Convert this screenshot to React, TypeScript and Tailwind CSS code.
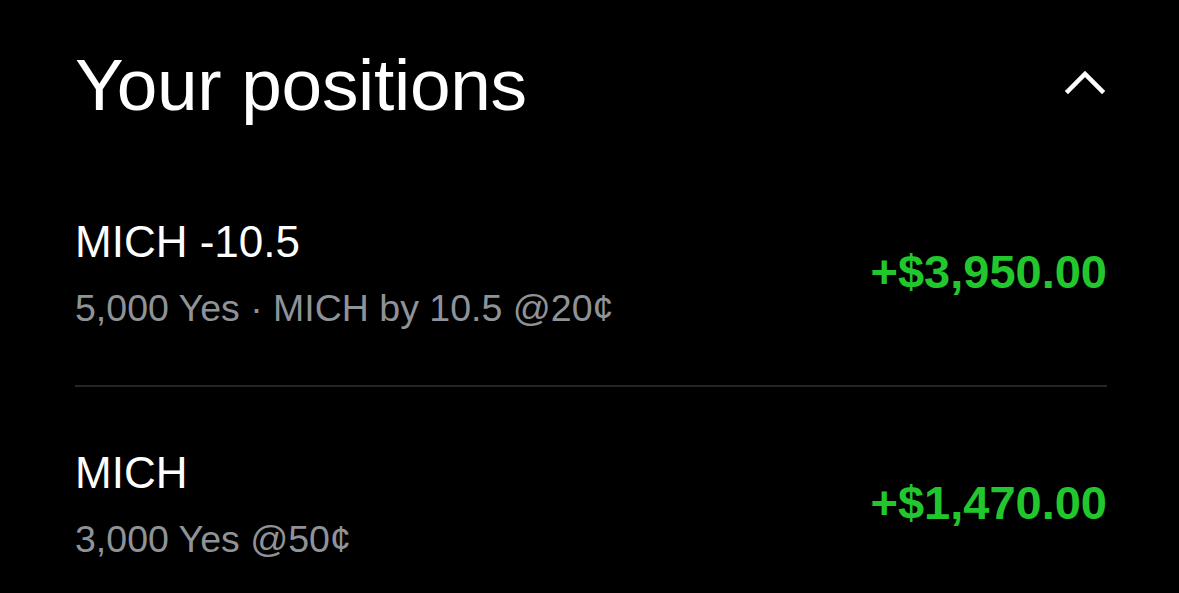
import React from 'react';

const positions = [
  { name: 'MICH -10.5', detail: '5,000 Yes · MICH by 10.5 @20¢', pnl: '+$3,950.00' },
  { name: 'MICH', detail: '3,000 Yes @50¢', pnl: '+$1,470.00' },
];

function ChevronUp() {
  return (
    <svg width="40" height="26" viewBox="0 0 40 26" fill="none" className="mb-[6px] mr-[2px]">
      <polyline points="3,22 20,5 37,22" stroke="white" strokeWidth="4.5" strokeLinecap="square" strokeLinejoin="miter" />
    </svg>
  );
}

export default function App() {
  return (
    <div
      className="min-h-screen bg-black text-white pl-[75px] pr-[72px] pt-[45px]"
      style={{ fontFamily: '"Liberation Sans", Arial, sans-serif' }}
    >
      {/* Header */}
      <div className="flex items-center justify-between h-[80px]">
        <h1 className="text-[73px] leading-[80px] font-normal tracking-[-0.3px]">Your positions</h1>
        <ChevronUp />
      </div>

      {/* Positions */}
      <div>
        {positions.map((p, i) => (
          <div
            key={p.name}
            className={
              i === 0
                ? 'flex items-center justify-between pt-[91px] pb-[55px] border-b-2 border-[#262626]'
                : 'flex items-center justify-between pt-[60px]'
            }
          >
            <div>
              <div className="text-[44px] leading-[52px]">{p.name}</div>
              <div className="mt-[18px] text-[37.5px] leading-[44px] text-[#8f9398]">{p.detail}</div>
            </div>
            <div className="text-[47px] leading-[52px] font-bold text-[#22c72e] pb-[2px]">{p.pnl}</div>
          </div>
        ))}
      </div>
    </div>
  );
}
